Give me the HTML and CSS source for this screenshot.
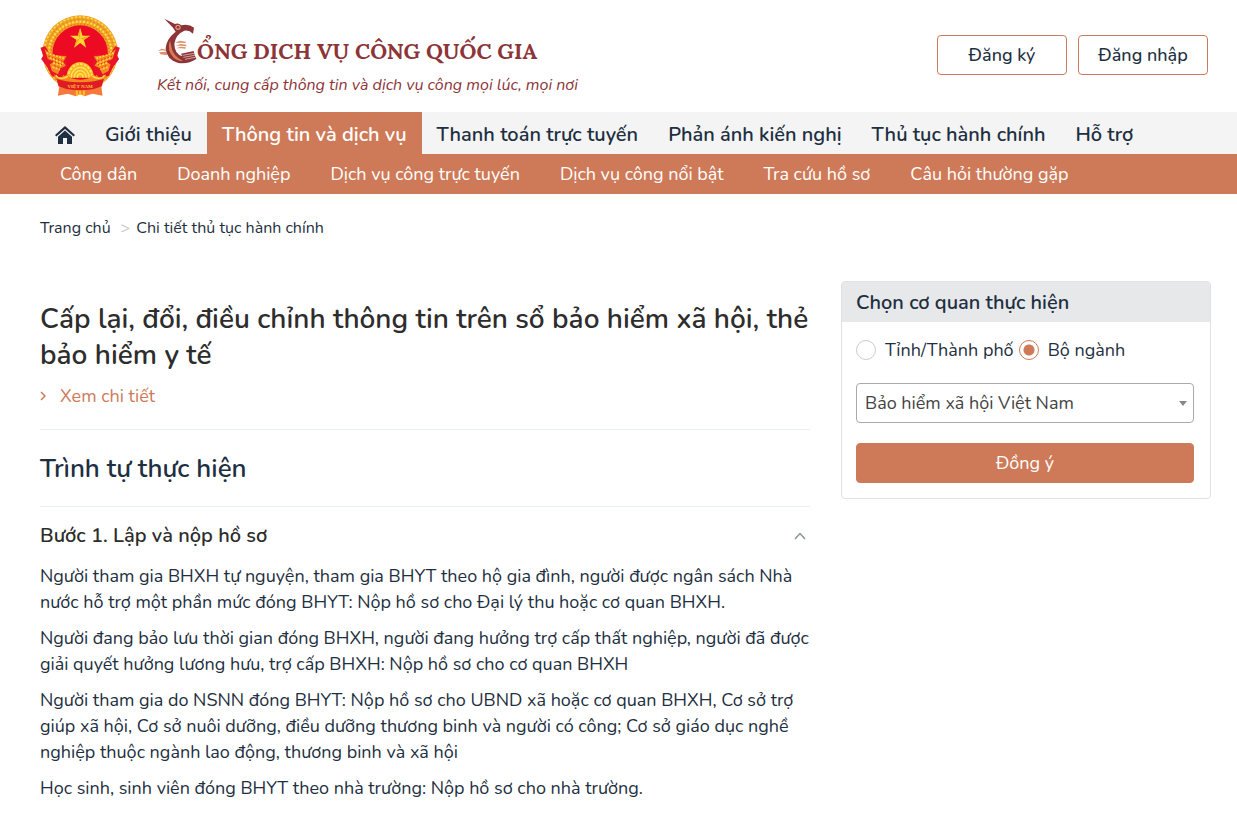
FILE: index.html
```html
<!DOCTYPE html>
<html lang="vi">
<head>
    <meta charset="UTF-8">
    <meta name="viewport" content="width=device-width, initial-scale=1.0">
    <title>Cổng Dịch vụ công Quốc gia</title>
    <link rel="stylesheet" href="styles.css">
</head>
<body>
    <header class="header">
        <a href="#" class="brand">
            <svg class="emblem" viewBox="32 28 240 246" aria-hidden="true">
                <path d="M92 222 L84 270 L114 264 L138 272 L151 264 L164 272 L188 264 L218 270 L212 222 Z" fill="#f4793a"/>
                <path d="M138 246h6v24h-6zM148 246h6v22h-6zM159 246h6v24h-6z" fill="#ffc61a"/>
                <circle cx="151" cy="142" r="113" fill="#f0a126"/>
                <circle cx="151" cy="142" r="108" fill="none" stroke="#ffd84a" stroke-width="5" stroke-dasharray="7 5"/>
                <circle cx="151" cy="142" r="101" fill="none" stroke="#e08a1a" stroke-width="4" stroke-dasharray="5 7"/>
                <circle cx="151" cy="142" r="94" fill="none" stroke="#ffe14a" stroke-width="6" stroke-dasharray="6 5"/>
                <circle cx="151" cy="142" r="87" fill="none" stroke="#e5761c" stroke-width="4" stroke-dasharray="4 6"/>
                <circle cx="151" cy="142" r="83" fill="#ec0b22"/>
                <path d="M32 126 L46 122 L64 150 L110 146 L112 190 L96 216 L66 212 L52 184 L34 160 L40 150 Z" fill="#e8142a"/>
                <path d="M270 126 L256 122 L238 150 L192 146 L190 190 L206 216 L236 212 L250 184 L268 160 L262 150 Z" fill="#e8142a"/>
                <path d="M44 130 L66 148 L110 152 L100 168 L108 180 L92 188 L84 206 L66 196 L60 176 L72 168 L54 160 Z" fill="#f58a22"/>
                <path d="M258 130 L236 148 L192 152 L202 168 L194 180 L210 188 L218 206 L236 196 L242 176 L230 168 L248 160 Z" fill="#f58a22"/>
                <path d="M50 142l52 16M60 156l40 18M70 172l28 8M68 184l22 8M252 142l-52 16M242 156l-40 18M232 172l-28 8M234 184l-22 8" stroke="#ffd93b" stroke-width="5" stroke-dasharray="6 4"/>
                <path d="M56 152l46 16M66 165l34 14M74 180l20 10M246 152l-46 16M236 165l-34 14M228 180l-20 10" stroke="#d92a1c" stroke-width="3" stroke-dasharray="4 6"/>
                <path d="M151 67 L158 90 L181 90 L162 103 L169 126 L151 112 L133 126 L140 103 L121 90 L144 90 Z" fill="#ffd735"/>
                <path d="M151 67 L151 98 L144 90 Z M181 90 L151 98 L162 103 Z M133 126 L151 98 L140 103 Z" fill="#f5a91f"/>
                <path d="M110 216 A41 47 0 0 1 192 216 Z" fill="#f9b12d"/>
                <path d="M115 216 A36 41 0 0 1 187 216" fill="none" stroke="#ffe650" stroke-width="6" stroke-dasharray="8 4"/>
                <path d="M124 216 A27 31 0 0 1 178 216 M133 216 A18 21 0 0 1 169 216 M142 216 A9 11 0 0 1 160 216" fill="none" stroke="#ffe650" stroke-width="4"/>
                <path d="M74 204 Q78 216 94 214 Q106 212 112 206 Q120 222 151 222 Q182 222 190 206 Q196 212 208 214 Q224 216 228 204 L228 220 Q212 232 196 226 Q151 234 106 226 Q90 232 74 220 Z" fill="#f58a22"/>
                <path d="M78 208 Q84 220 98 218 Q108 216 114 212 M224 208 Q218 220 204 218 Q194 216 188 212" fill="none" stroke="#ffe14a" stroke-width="4"/>
                <path d="M80 220 L106 226 Q151 234 196 226 L222 220 L216 242 L192 250 Q151 258 110 250 L86 242 Z" fill="#e11b22"/>
                <text x="151" y="246" class="emblem-text">VIỆT NAM</text>
            </svg>
            <span class="brand-text">
                <span class="brand-title">
                    <svg class="bird" viewBox="22 26 120 136" aria-hidden="true">
                        <path d="M24 124l12-7 14 3v4l-12-2zM30 133l10-4 12 2v5l-10-1zM28 128l22-2v4l-18 2zM76 100l14-7 18 3v4l-16-1zM78 108l14-5 18 2v5l-16-2zM80 116l12-5 16 2v4l-14-1z" fill="#dd9068"/>
                        <path d="M44 27 L76 43 Q86 38 95 47 Q118 42 133 54 L130 72 Q118 60 104 63 Q78 74 74 102 Q74 132 98 140 L94 132 L132 124 Q134 138 140 148 Q116 164 86 160 Q50 150 48 116 Q50 88 78 66 L70 54 Z" fill="#8c3437"/>
                        <circle cx="85" cy="53" r="8" fill="#dd9a70"/>
                        <circle cx="85" cy="53" r="4" fill="#8c3437"/>
                        <path d="M61 92 Q50 122 72 144 Q84 154 100 154 Q68 138 65 110 Z" fill="#d97a50"/>
                        <path d="M99 137l34-6M101 143l34-6M106 149l31-6" stroke="#f3dcd0" stroke-width="2"/>
                    </svg>
                    <span>ỔNG DỊCH VỤ CÔNG QUỐC GIA</span>
                </span>
                <span class="brand-slogan">Kết nối, cung cấp thông tin và dịch vụ công mọi lúc, mọi nơi</span>
            </span>
        </a>
        <div class="account">
            <button type="button" class="btn btn-outline">Đăng ký</button>
            <button type="button" class="btn btn-outline">Đăng nhập</button>
        </div>
    </header>

    <nav class="nav" aria-label="Menu chính">
        <a href="#" class="nav-item" aria-label="Trang chủ">
            <svg class="home" viewBox="0 0 20 18" aria-hidden="true">
                <path d="M10 0 L20 9 L18.600 10.600 L10 3 L1.400 10.600 L0 9 Z"/>
                <path d="M10 4.500 L17 10.700 V18 H12 V12 H8 V18 H3 V10.700 Z"/>
            </svg>
        </a>
        <a href="#" class="nav-item">Giới thiệu</a>
        <a href="#" class="nav-item active">Thông tin và dịch vụ</a>
        <a href="#" class="nav-item">Thanh toán trực tuyến</a>
        <a href="#" class="nav-item">Phản ánh kiến nghị</a>
        <a href="#" class="nav-item">Thủ tục hành chính</a>
        <a href="#" class="nav-item">Hỗ trợ</a>
    </nav>
    <nav class="subnav" aria-label="Thông tin và dịch vụ">
        <a href="#">Công dân</a>
        <a href="#">Doanh nghiệp</a>
        <a href="#">Dịch vụ công trực tuyến</a>
        <a href="#">Dịch vụ công nổi bật</a>
        <a href="#">Tra cứu hồ sơ</a>
        <a href="#">Câu hỏi thường gặp</a>
    </nav>

    <div class="breadcrumb">
        <a href="#">Trang chủ</a>
        <span class="separator">&gt;</span>
        <a href="#">Chi tiết thủ tục hành chính</a>
    </div>

    <div class="layout">
        <main class="content">
            <h1>Cấp lại, đổi, điều chỉnh thông tin trên sổ bảo hiểm xã hội, thẻ bảo hiểm y tế</h1>
            <a href="#" class="detail-link">
                <svg class="chevron-right" viewBox="0 0 6 10" aria-hidden="true"><path d="M1 1l4 4-4 4"/></svg>
                Xem chi tiết
            </a>
            <h2>Trình tự thực hiện</h2>
            <section class="step">
                <h3>
                    Bước 1. Lập và nộp hồ sơ
                    <svg class="chevron-up" viewBox="0 0 12 8" aria-hidden="true"><path d="M1 7l5-5.500 5 5.500"/></svg>
                </h3>
                <p>Người tham gia BHXH tự nguyện, tham gia BHYT theo hộ gia đình, người được ngân sách Nhà nước hỗ trợ một phần mức đóng BHYT: Nộp hồ sơ cho Đại lý thu hoặc cơ quan BHXH.</p>
                <p>Người đang bảo lưu thời gian đóng BHXH, người đang hưởng trợ cấp thất nghiệp, người đã được giải quyết hưởng lương hưu, trợ cấp BHXH: Nộp hồ sơ cho cơ quan BHXH</p>
                <p>Người tham gia do NSNN đóng BHYT: Nộp hồ sơ cho UBND xã hoặc cơ quan BHXH, Cơ sở trợ giúp xã hội, Cơ sở nuôi dưỡng, điều dưỡng thương binh và người có công; Cơ sở giáo dục nghề nghiệp thuộc ngành lao động, thương binh và xã hội</p>
                <p>Học sinh, sinh viên đóng BHYT theo nhà trường: Nộp hồ sơ cho nhà trường.</p>
            </section>
        </main>

        <aside class="panel">
            <h2 class="panel-title">Chọn cơ quan thực hiện</h2>
            <form class="panel-body">
                <div class="radios">
                    <label><input type="radio" name="agency"> Tỉnh/Thành phố</label>
                    <label><input type="radio" name="agency" checked> Bộ ngành</label>
                </div>
                <div class="select-wrap">
                    <select aria-label="Bộ ngành">
                        <option>Bảo hiểm xã hội Việt Nam</option>
                    </select>
                </div>
                <button type="button" class="btn btn-primary">Đồng ý</button>
            </form>
        </aside>
    </div>
</body>
</html>
```
FILE: styles.css
```css
* {
    box-sizing: border-box;
}
body {
    margin: 0;
    font-family: Nunito, Roboto, sans-serif;
    font-size: 18px;
    line-height: 26px;
    color: #1e2f41;
    background: #fff;
}
a {
    color: inherit;
    text-decoration: none;
}
h1, h2, h3, p {
    margin: 0;
}

/* header */
.header {
    display: flex;
    align-items: center;
    justify-content: space-between;
    height: 112px;
    padding: 0 29px 0 40px;
}
.brand {
    display: flex;
    align-items: center;
    gap: 36px;
    color: #8c3437;
}
.emblem {
    width: 81px;
    height: 82px;
}
.emblem-text {
    font-family: "Liberation Serif", serif;
    font-size: 15px;
    font-weight: bold;
    text-anchor: middle;
    fill: #ffc93a;
}
.brand-text {
    display: flex;
    flex-direction: column;
    gap: 8px;
    padding-top: 3px;
}
.brand-title {
    display: flex;
    align-items: flex-end;
    font-family: Lora, "Liberation Serif", serif;
    font-size: 22px;
    font-weight: bold;
}
.bird {
    width: 40px;
    height: 46px;
}
.brand-slogan {
    font-size: 16px;
    font-style: italic;
}
.account {
    display: flex;
    gap: 11px;
    margin-bottom: 2px;
}
.btn {
    height: 40px;
    border: 1px solid #ce7a58;
    border-radius: 4px;
    font: inherit;
    cursor: pointer;
}
.btn-outline {
    width: 130px;
    background: #fff;
    color: #1e2f41;
    font-weight: 500;
}
.btn-primary {
    width: 100%;
    background: #ce7a58;
    color: #fff;
}

/* navigation */
.nav {
    display: flex;
    height: 42px;
    padding: 0 40px;
    background: #f4f4f4;
    font-size: 20px;
    font-weight: 600;
}
.nav-item {
    display: flex;
    align-items: center;
    padding: 4px 15px 0;
    white-space: nowrap;
}
.nav-item.active {
    background: #ce7a58;
    color: #fff;
}
.home {
    width: 20px;
    height: 18px;
    fill: #1e2f41;
}
.subnav {
    display: flex;
    align-items: center;
    gap: 40px;
    height: 40px;
    padding: 0 60px;
    background: #ce7a58;
    color: #fff;
    white-space: nowrap;
}
.breadcrumb {
    display: flex;
    gap: 6px;
    padding: 21px 40px;
    font-size: 16px;
}
.separator {
    margin-left: 4px;
    color: #c5c9ce;
}

/* page body */
.layout {
    display: grid;
    grid-template-columns: 1fr 370px;
    align-items: start;
    gap: 31px;
    padding: 19px 26px 0 40px;
}
h1 {
    padding-top: 20px;
    font-size: 28px;
    font-weight: 600;
    line-height: 36px;
    color: #2d2d2d;
}
.detail-link {
    display: flex;
    align-items: center;
    gap: 14px;
    padding: 10px 0 20px;
    border-bottom: 1px solid #e9edf5;
    color: #ce7a58;
}
.chevron-right {
    width: 6px;
    height: 10px;
    fill: none;
    stroke: #ce7a58;
    stroke-width: 1.5;
}
.content h2 {
    padding: 21px 0 19px;
    border-bottom: 1px solid #e9edf5;
    font-size: 26px;
    font-weight: 600;
    line-height: 36px;
}
h3 {
    display: flex;
    align-items: center;
    justify-content: space-between;
    padding: 16px 4px 14px 0;
    font-size: 20px;
    font-weight: 600;
    color: #2d2d2d;
}
.chevron-up {
    width: 12px;
    height: 8px;
    fill: none;
    stroke: #8b929c;
    stroke-width: 1.5;
}
.step p {
    margin-bottom: 10px;
}

/* agency panel */
.panel {
    border: 1px solid #dfe1e4;
    border-radius: 4px;
}
.panel-title {
    padding: 1px 14px 0;
    background: #e7e8ea;
    font-size: 20px;
    font-weight: 600;
    line-height: 39px;
}
.panel-body {
    padding: 15px 16px 15px 14px;
}
.radios {
    display: flex;
    gap: 5px;
    white-space: nowrap;
}
.radios label {
    display: flex;
    align-items: center;
    gap: 9px;
}
.radios input {
    appearance: none;
    width: 20px;
    height: 20px;
    margin: 0;
    border: 1px solid #c9cccf;
    border-radius: 50%;
}
.radios input:checked {
    border-color: #ce7a58;
    background: radial-gradient(circle, #ce7a58 5px, #fff 6px);
}
.select-wrap {
    display: grid;
    align-items: center;
    margin: 20px 0;
}
.select-wrap select,
.select-wrap::after {
    grid-area: 1 / 1;
}
.select-wrap::after {
    content: "";
    justify-self: end;
    margin-right: 7px;
    border: 4px solid transparent;
    border-top: 5px solid #888;
    border-bottom: 0;
    pointer-events: none;
}
select {
    appearance: none;
    width: 100%;
    height: 40px;
    padding: 0 8px;
    border: 1px solid #aaa;
    border-radius: 4px;
    background: #fff;
    color: #444;
    font: inherit;
}
```
